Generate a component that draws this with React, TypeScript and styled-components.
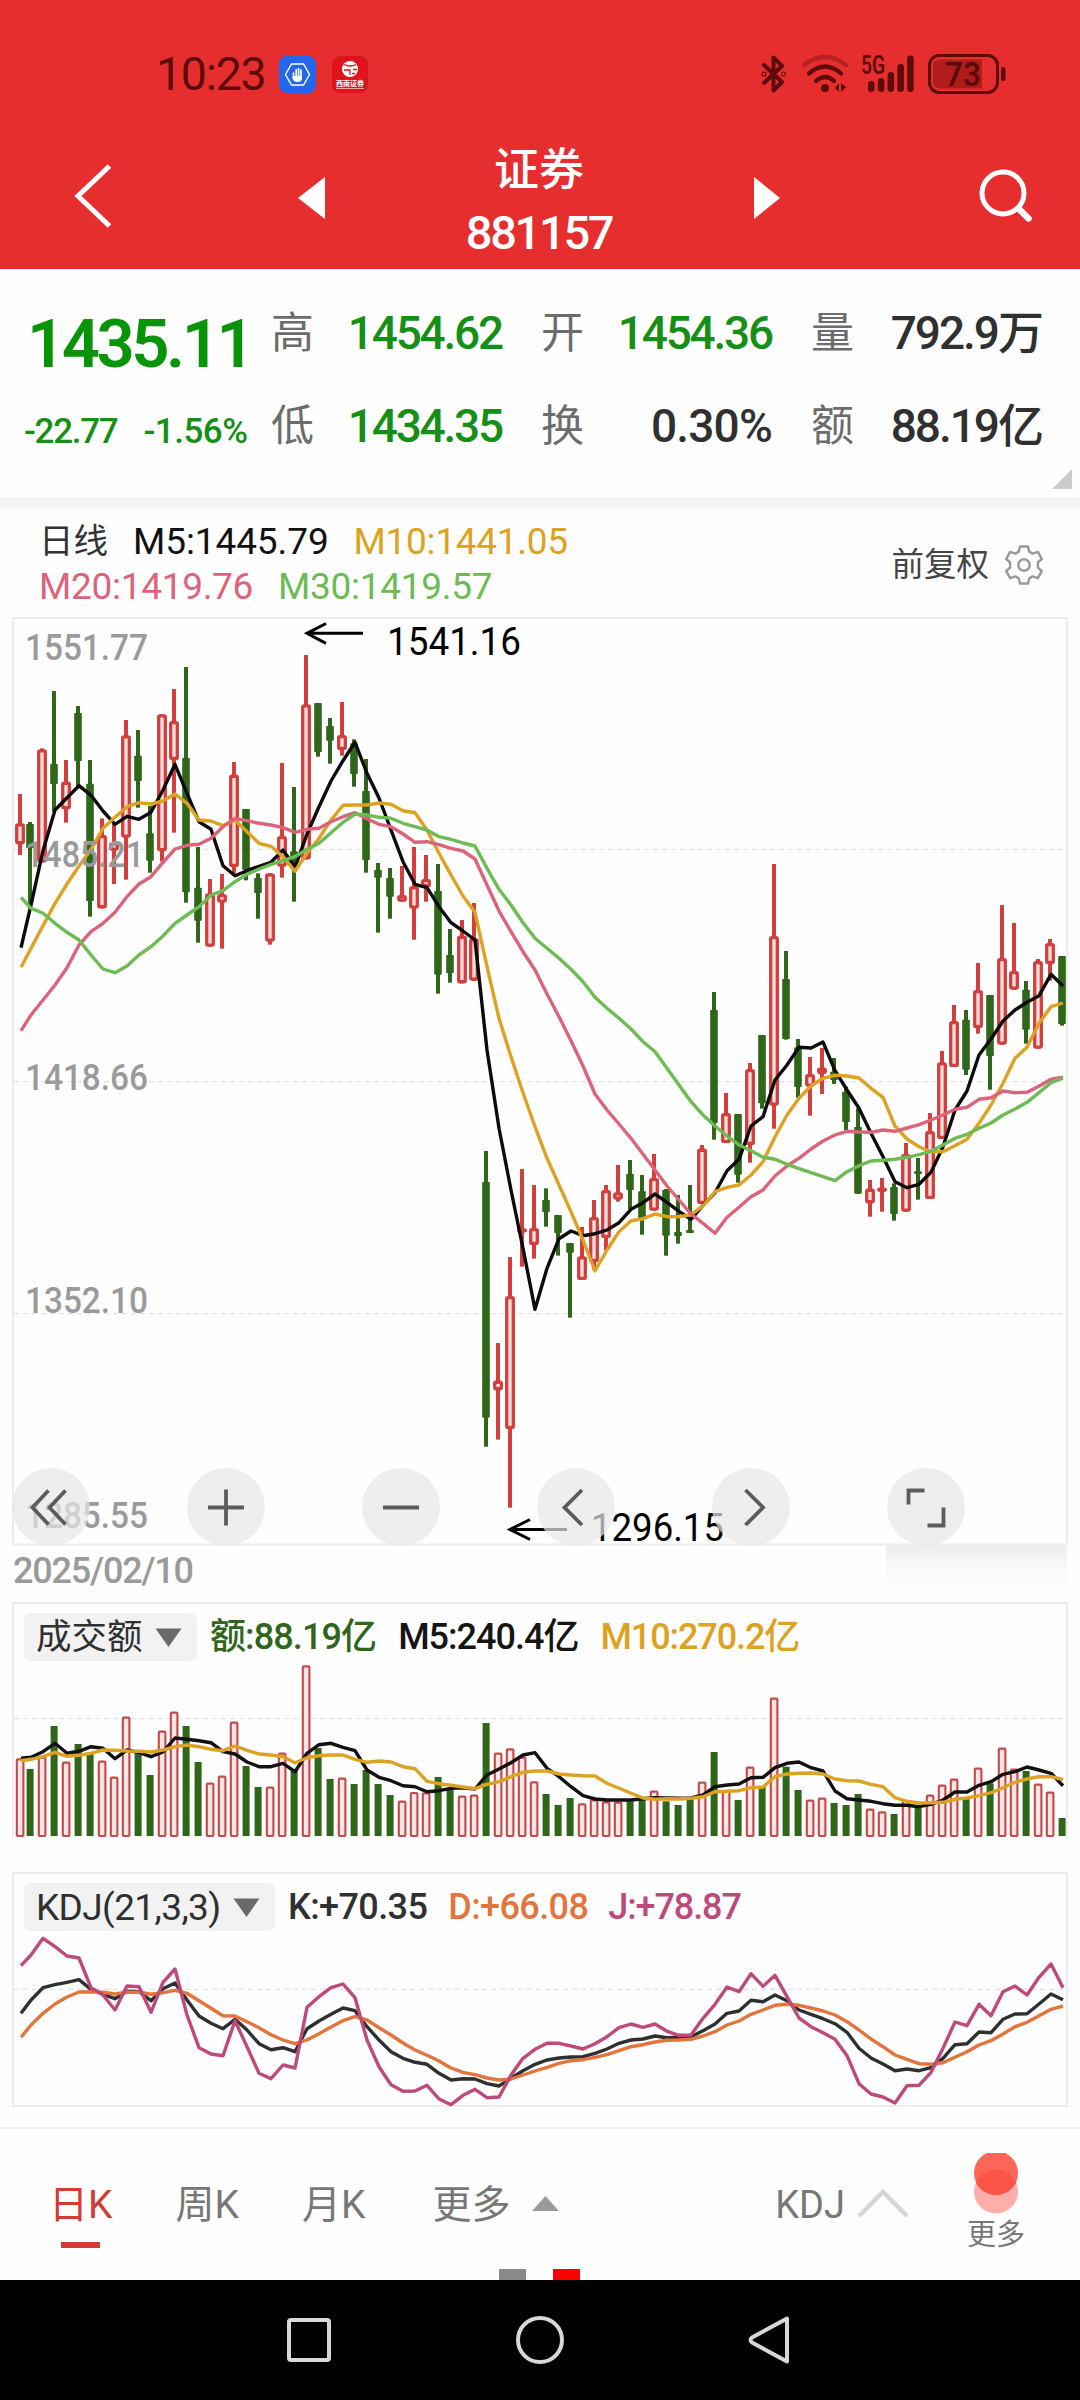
import React from "react";
import styled, { createGlobalStyle } from "styled-components";

const FONT = `Roboto, "Noto Sans CJK SC", sans-serif`;
const RED = "#d23f3d";
const GREEN = "#30661a";
const AMBER = "#dea222";

const Global = createGlobalStyle`
  html, body { margin: 0; padding: 0; background: #fefefe; }
  * { box-sizing: border-box; }
  svg { display: block; overflow: visible; }
`;

const Screen = styled.div`
  width: 1080px;
  height: 2400px;
  display: flex;
  flex-direction: column;
  background: #fefefe;
  font-family: ${FONT};
  white-space: nowrap;
  overflow: hidden;
`;

const Label = styled.span<{ $size: number; $color: string; $weight?: number; $track?: number }>`
  font-size: ${(p) => p.$size}px;
  color: ${(p) => p.$color};
  font-weight: ${(p) => p.$weight ?? 400};
  letter-spacing: ${(p) => p.$track ?? 0}px;
`;

/* ---------- header ---------- */

const Header = styled.header`
  height: 269px;
  background: #e62e2f;
  display: flex;
  flex-direction: column;
`;

const StatusBar = styled.div`
  height: 140px;
  padding: 8px 74px 0 156px;
  display: flex;
  align-items: center;
  justify-content: space-between;
`;

const StatusGroup = styled.div<{ $gap: number }>`
  display: flex;
  align-items: center;
  gap: ${(p) => p.$gap}px;
`;

const Clock = styled(Label)`
  line-height: 60px;
  width: 107px;
`;

const NavBar = styled.div`
  height: 129px;
  display: grid;
  grid-template-columns: 256px 110px 346px 110px 258px;
  grid-template-rows: 112px;
  align-items: center;
  justify-items: center;
`;

const NavEdge = styled.div<{ $end?: boolean }>`
  justify-self: ${(p) => (p.$end ? "end" : "start")};
  padding: ${(p) => (p.$end ? "0 46px 0 0" : "0 0 0 72px")};
`;

const Step = styled.svg`
  margin-top: 3px;
`;

const Title = styled.div`
  align-self: start;
  display: flex;
  flex-direction: column;
  align-items: center;
  line-height: 62px;
`;

/* ---------- quote ---------- */

const Quote = styled.section`
  position: relative;
  height: 228px;
  display: flex;
`;

const PriceBlock = styled.div`
  width: 271px;
  padding: 35px 0 0 24px;
`;

const Price = styled.div`
  padding-left: 3px;
  line-height: 80px;
  font-size: 67px;
  font-weight: 600;
  letter-spacing: -3.5px;
  color: #089408;
`;

const Change = styled.div`
  margin-top: 28px;
  display: flex;
  gap: 26px;
  line-height: 40px;
`;

const Stats = styled.div`
  padding-top: 17px;
  display: grid;
  grid-template-columns: repeat(3, 231px);
  grid-auto-rows: 93px;
  column-gap: 39px;
`;

const Stat = styled.div`
  display: flex;
  align-items: center;
  justify-content: space-between;
  line-height: 60px;
`;

const Corner = styled.i`
  position: absolute;
  right: 8px;
  bottom: 8px;
  border-left: 20px solid transparent;
  border-bottom: 20px solid #cbcbcb;
`;

const Divider = styled.div`
  height: 12px;
  background: #f4f4f4;
`;

/* ---------- charts ---------- */

const LegendBar = styled.section`
  height: 108px;
  padding: 10px 35px 0 39px;
  display: flex;
  justify-content: space-between;
`;

const LegendRow = styled.div`
  display: flex;
  gap: 25px;
  line-height: 45px;
`;

const Adjust = styled.div`
  height: 92px;
  display: flex;
  align-items: center;
  gap: 14px;
  line-height: 44px;
`;

const PriceChart = styled.section`
  position: relative;
  height: 929px;
`;

const Tools = styled.div`
  position: absolute;
  left: 12px;
  bottom: 0;
  display: flex;
  gap: 97px;
`;

const Tool = styled.button`
  width: 78px;
  height: 78px;
  padding: 0;
  border: 0;
  border-radius: 50%;
  background: rgba(231, 231, 231, 0.7);
`;

const DateRow = styled.div`
  position: relative;
  height: 56px;
  padding-left: 13px;
  line-height: 51px;
`;

const SoftShade = styled.div`
  position: absolute;
  left: 886px;
  top: 0;
  width: 181px;
  height: 44px;
  background: linear-gradient(#ededed, #f8f8f8 45%, #fefefe);
`;

const Panel = styled.section<{ $height: number; $open?: boolean; $gap?: number }>`
  width: 1056px;
  height: ${(p) => p.$height}px;
  margin: ${(p) => p.$gap ?? 0}px 0 0 12px;
  padding-top: 9px;
  border: 2px solid #ececec;
  ${(p) => p.$open && "border-bottom-color: transparent;"}
  display: flex;
  flex-direction: column;
`;

const PanelHead = styled.div`
  display: flex;
  align-items: center;
  height: 48px;
  padding-left: 10px;
  line-height: 51px;
`;

const Picker = styled.div<{ $width: number }>`
  width: ${(p) => p.$width}px;
  height: 48px;
  margin-right: 13px;
  padding: 0 15px 0 12px;
  border-radius: 7px;
  background: #f2f2f2;
  display: flex;
  align-items: center;
  justify-content: space-between;
`;

const Reading = styled(Label)<{ $after: number }>`
  margin-right: ${(p) => p.$after}px;
`;

const Plot = styled.svg`
  margin-left: -14px;
  flex: none;
`;

/* ---------- bottom ---------- */

const Tabs = styled.nav`
  position: relative;
  height: 153px;
  margin-top: 20px;
  border-top: 2px solid #f0f0f0;
  padding: 0 53px 0 49px;
  display: flex;
  justify-content: space-between;
`;

const TabGroup = styled.div<{ $gap: number }>`
  display: flex;
  gap: ${(p) => p.$gap}px;
`;

const Tab = styled.div<{ $active?: boolean }>`
  height: 122px;
  padding-top: 41px;
  display: flex;
  flex-direction: column;
  align-items: center;
  font-size: 39px;
  line-height: 70px;
  color: ${(p) => (p.$active ? "#d23a34" : "#777")};
  &::after {
    content: "";
    width: 39px;
    height: 6px;
    margin-top: 2px;
    background: ${(p) => (p.$active ? "#d23a34" : "transparent")};
  }
`;

const TabInline = styled.div<{ $gap: number; $before?: number; $size?: number }>`
  height: 111px;
  margin-left: ${(p) => p.$before ?? 0}px;
  padding-top: 41px;
  display: flex;
  align-items: center;
  gap: ${(p) => p.$gap}px;
  font-size: ${(p) => p.$size ?? 39}px;
  line-height: 70px;
  color: #777;
`;

const More = styled.div`
  width: 58px;
  margin: 24px 2px 0 0;
  display: flex;
  flex-direction: column;
  align-items: center;
  font-size: 29px;
  line-height: 42px;
  color: #777;
`;

const Pager = styled.div`
  position: absolute;
  left: 499px;
  bottom: 0;
  display: flex;
  gap: 27px;
`;

const PagerDot = styled.i<{ $on?: boolean }>`
  width: 27px;
  height: 11px;
  background: ${(p) => (p.$on ? "#fb0000" : "#8a8a8a")};
`;

const SystemNav = styled.footer`
  flex: 1;
  padding-right: 5px;
  background: #000;
  display: flex;
  justify-content: center;
  align-items: center;
  gap: 183px;
`;

/* ---------- data ---------- */

type Candle = [string, number, number, number, number];

/* Candles are [colour, high, body top, body bottom, low], three units to a pixel. */
const shift = (base: number, rows: Candle[]): Candle[] =>
  rows.map(([c, h, t, b, l]) => [c, h + base, t + base, b + base, l + base]);

const candles: Candle[] = [
  ...shift(0, [
    ["r", 552, 640, 703, 735], ["g", 636, 642, 714, 895], ["r", 415, 418, 757, 757], ["g", 243, 462, 522, 605],
    ["r", 450, 515, 598, 638], ["g", 288, 309, 453, 535], ["g", 450, 521, 873, 920], ["r", 625, 675, 895, 895],
    ["r", 640, 697, 722, 822], ["r", 330, 376, 683, 809], ["g", 360, 437, 513, 593], ["g", 588, 670, 752, 788],
    ["r", 313, 313, 724, 755], ["r", 237, 333, 450, 668], ["g", 171, 444, 847, 878], ["g", 711, 833, 932, 998],
    ["r", 807, 850, 1010, 1010], ["r", 792, 852, 878, 1016], ["r", 456, 494, 771, 790], ["g", 597, 597, 780, 811],
    ["g", 790, 804, 849, 926], ["r", 790, 790, 995, 1004], ["r", 459, 678, 770, 803], ["g", 531, 724, 745, 875],
    ["r", 135, 283, 748, 748], ["g", 279, 279, 426, 440], ["g", 324, 348, 392, 461], ["r", 276, 375, 420, 437],
    ["g", 388, 400, 492, 530], ["g", 447, 543, 750, 788], ["g", 759, 780, 803, 968], ["g", 774, 804, 860, 926],
    ["r", 768, 855, 875, 875], ["r", 711, 829, 896, 989], ["r", 735, 807, 832, 875], ["g", 762, 843, 1094, 1151],
    ["g", 957, 1035, 1089, 1118], ["r", 930, 977, 1120, 1120], ["r", 879, 985, 1112, 1112],
  ]),
  ...shift(1320, [
    ["g", 303, 396, 1103, 1190], ["r", 879, 992, 1021, 1169], ["r", 621, 738, 1137, 1373], ["r", 357, 535, 546, 650],
    ["r", 405, 534, 585, 626], ["g", 415, 450, 486, 530], ["g", 495, 495, 549, 617], ["g", 579, 579, 608, 803],
    ["r", 531, 619, 690, 690], ["r", 450, 501, 636, 660], ["r", 405, 420, 564, 602], ["r", 345, 427, 449, 455],
    ["g", 330, 372, 420, 478], ["g", 375, 424, 508, 554], ["r", 312, 384, 482, 482], ["g", 417, 420, 557, 617],
    ["g", 435, 546, 558, 581], ["g", 405, 540, 549, 549], ["r", 285, 296, 462, 462],
  ]),
  ...shift(630, [
    ["g", 516, 570, 909, 959], ["r", 819, 879, 969, 969], ["g", 882, 882, 1064, 1088], ["r", 729, 747, 975, 1028],
    ["g", 645, 645, 850, 866], ["r", 132, 348, 857, 926], ["g", 393, 477, 657, 659], ["g", 657, 682, 801, 833],
    ["r", 711, 762, 800, 887], ["r", 684, 743, 762, 822], ["g", 714, 755, 780, 792], ["g", 800, 815, 906, 930],
    ["g", 865, 921, 1121, 1121], ["r", 1080, 1106, 1150, 1190], ["r", 1074, 1103, 1115, 1175], ["g", 1090, 1101, 1182, 1202],
    ["r", 969, 1002, 1175, 1175], ["g", 1014, 1054, 1062, 1139], ["r", 879, 933, 1137, 1137], ["r", 693, 727, 957, 957],
    ["r", 555, 603, 741, 741], ["g", 570, 599, 749, 765], ["r", 429, 510, 624, 641], ["g", 525, 525, 708, 809],
    ["r", 255, 414, 674, 674], ["r", 309, 453, 509, 509], ["g", 483, 509, 629, 671], ["r", 417, 423, 686, 686],
    ["r", 357, 369, 432, 482], ["g", 408, 408, 612, 617],
  ]),
];

const up = (base: number, ys: number[]) => ys.map((y) => y + base);

const m5 = [
  ...up(0, [1013, 885, 722, 600, 563, 527, 556, 603, 643, 619, 628, 607, 540, 463, 550, 635, 658, 767, 797, 782, 769, 757, 720, 772, 672, 590, 513, 452, 397, 490, 564, 660, 755, 823, 833, 890, 938, 963, 990]),
  ...up(1320, [0, 235, 420, 595, 778, 655, 566, 543, 557, 551, 540, 518, 478, 458, 432, 457, 484, 508, 466]),
  ...up(630, [1118, 1052, 1018, 918, 890, 780, 735, 682, 684, 666, 752, 810, 865, 940, 1010, 1085, 1103, 1093, 1057, 980, 870, 813, 705, 657, 603, 570, 547, 527, 463, 498]),
];
const m10 = [
  ...up(0, [1072, 1015, 947, 880, 822, 768, 718, 655, 622, 590, 578, 582, 573, 552, 580, 630, 633, 647, 630, 665, 700, 709, 740, 784, 730, 685, 630, 586, 585, 585, 579, 583, 602, 608, 660, 730, 795, 858, 907, 1070, 1225]),
  ...up(1320, [20, 128, 230, 325, 405, 485, 570, 663, 600, 545, 512, 506, 492, 500, 500, 494, 468]),
  ...up(630, [1115, 1102, 1095, 1065, 1025, 950, 885, 835, 798, 775, 766, 768, 774, 805, 832, 918, 957, 980, 995, 995, 977, 958, 910, 855, 790, 715, 682, 610, 560, 549]),
];
const m20 = [
  ...up(0, [1262, 1215, 1170, 1125, 1073, 1005, 965, 940, 907, 860, 822, 800, 757, 717, 706, 703, 685, 650, 625, 632, 640, 645, 653, 667, 658, 655, 635, 620, 608, 626, 643, 650, 672, 697, 695, 704, 715, 723, 747, 825, 903, 965, 1025, 1080, 1152, 1220, 1292, 1368]),
  ...up(1320, [132, 180, 222, 265, 313, 360, 408, 450, 492, 520, 550]),
  ...up(630, [1192, 1162, 1130, 1110, 1068, 1038, 1015, 987, 963, 945, 934, 936, 937, 930, 934, 924, 914, 900, 885, 868, 862, 838, 833, 813, 818, 817, 799, 778, 772]),
];
const m30 = [
  ...up(0, [862, 895, 910, 940, 967, 990, 1035, 1077, 1088, 1068, 1035, 1010, 978, 940, 915, 890, 855, 842, 815, 793, 777, 763, 752, 740, 718, 700, 668, 637, 612, 615, 622, 625, 640, 650, 660, 680, 688, 699, 708, 775, 838, 885, 938, 985, 1015, 1045, 1078, 1115, 1162, 1195, 1225, 1257, 1295, 1325, 1375, 1425]),
  ...up(1320, [155, 195]),
  ...up(630, [918, 948, 975, 992, 1012, 1018, 1033, 1046, 1058, 1070, 1082, 1055, 1037, 1023, 1021, 1018, 1012, 1004, 994, 975, 955, 943, 925, 909, 885, 867, 847, 818, 788, 774]),
];

const volume = [
  355, 387, 350, 258, 365, 312, 340, 362, 410, 230, 340, 405, 272, 215, 258, 366, 428, 407, 245, 378, 441, 440, 338, 390, 76, 324, 417, 413, 432, 390, 432, 465, 482, 456, 457, 411, 450, 467, 464, 249, 338, 325, 350, 424,
  462, 495, 474, 490, 478, 484, 485, 484, 480, 452, 484, 495, 478, 425, 336, 452, 480, 380, 440, 173, 380, 450, 479, 473, 489, 495, 462, 506, 514, 522, 480, 495, 464, 434, 416, 475, 383, 430, 323, 386, 393, 431, 455, 534,
];
const vol5 = [
  355, 352, 335, 310, 340, 334, 320, 325, 356, 330, 338, 350, 336, 294, 298, 302, 308, 335, 342, 366, 380, 380, 370, 395, 340, 314, 310, 322, 332, 390, 412, 422, 437, 440, 455, 452, 445, 443, 447, 405, 387, 368, 345, 338,
  385, 410, 440, 467, 477, 480, 480, 480, 476, 473, 474, 475, 474, 465, 440, 435, 432, 413, 412, 383, 370, 366, 383, 393, 453, 476, 480, 484, 491, 496, 496, 500, 493, 480, 456, 456, 436, 425, 403, 395, 381, 390, 400, 437,
];
const vol10 = [
  362, 358, 350, 337, 349, 346, 340, 330, 331, 333, 334, 336, 330, 320, 315, 320, 328, 332, 318, 331, 342, 345, 350, 368, 353, 347, 345, 345, 358, 367, 363, 366, 380, 386, 424, 431, 436, 441, 446, 433, 425, 410, 397, 393,
  393, 402, 405, 407, 408, 430, 445, 460, 474, 478, 476, 477, 475, 470, 455, 454, 452, 443, 441, 410, 402, 400, 399, 402, 417, 422, 423, 433, 440, 473, 484, 489, 488, 487, 478, 474, 467, 458, 443, 427, 417, 410, 410, 419,
];

const kdjJ = [
  317, 285, 235, 260, 288, 294, 383, 405, 450, 378, 380, 457, 367, 327, 465, 563, 582, 587, 482, 560, 640, 656, 615, 624, 442, 410, 383, 372, 413, 540, 620, 674, 694, 693, 676, 717, 734, 706, 688, 713, 711, 645, 595, 568,
  550, 550, 558, 567, 551, 530, 503, 492, 502, 492, 514, 526, 525, 475, 433, 381, 395, 341, 379, 346, 410, 474, 500, 518, 538, 587, 671, 702, 711, 729, 677, 676, 637, 565, 486, 497, 433, 467, 395, 378, 405, 352, 312, 383,
];
const kdjK = [
  460, 420, 383, 374, 367, 359, 388, 403, 416, 394, 395, 422, 386, 369, 420, 468, 490, 506, 478, 510, 551, 569, 563, 575, 506, 483, 463, 444, 452, 500, 540, 575, 595, 607, 613, 640, 660, 656, 657, 671, 678, 655, 632, 613,
  600, 594, 591, 590, 580, 567, 550, 540, 537, 528, 533, 532, 530, 512, 492, 460, 453, 421, 425, 405, 422, 450, 463, 476, 491, 517, 565, 594, 612, 632, 627, 632, 623, 595, 554, 551, 516, 518, 478, 462, 461, 432, 402, 419,
];
const kdjD = [
  532, 495, 460, 432, 411, 396, 395, 397, 402, 397, 397, 403, 398, 391, 400, 422, 445, 467, 468, 485, 503, 524, 540, 551, 540, 521, 501, 482, 470, 480, 503, 525, 549, 570, 586, 603, 624, 637, 644, 654, 660, 657, 645, 633,
  622, 610, 602, 599, 592, 584, 572, 560, 554, 546, 541, 540, 538, 528, 515, 495, 483, 463, 450, 436, 433, 436, 444, 453, 465, 485, 510, 537, 560, 585, 598, 611, 613, 608, 592, 575, 555, 542, 522, 500, 487, 467, 448, 438,
];

const xAt = (i: number) => (i === 0 ? 20 : 18 + 12 * i);

const Curve = ({ ys, color, origin }: { ys: number[]; color: string; origin: number }) => (
  <polyline
    points={ys.map((y, i) => `${xAt(i) + 1},${(origin + y / 3).toFixed(1)}`).join(" ")}
    fill="none"
    stroke={color}
    strokeWidth={3.4}
    strokeLinejoin="round"
  />
);

const Grid = ({ y }: { y: number }) => (
  <line x1={14} x2={1066} y1={y} y2={y} stroke="#e2e2e2" strokeWidth={1.3} strokeDasharray="5 4" />
);

const CandleMark = ({ i, row }: { i: number; row: Candle }) => {
  const [c, h, t, b, l] = row;
  const x = xAt(i);
  const y = (v: number) => 610 + v / 3;
  const hollow = c === "r";
  const height = (b - t) / 3;
  return (
    <g>
      <line x1={x} x2={x} y1={y(h)} y2={y(l)} stroke={hollow ? RED : GREEN} strokeWidth={4} />
      {hollow ? (
        <rect
          x={x - 3.3}
          y={y(t) + 1.6}
          width={6.6}
          height={Math.max(height - 3.2, 1)}
          rx={1.2}
          fill="#fbe2e0"
          stroke={RED}
          strokeWidth={3.3}
        />
      ) : (
        <rect x={x - 3.8} y={y(t)} width={7.6} height={height} rx={0.8} fill={GREEN} />
      )}
    </g>
  );
};

const VolumeBar = ({ i, top }: { i: number; top: number }) => {
  const x = xAt(i);
  const y = 1640 + top / 3;
  return candles[i][0] === "r" ? (
    <rect x={x - 3.2} y={y + 1} width={6.6} height={1835 - y} rx={1} fill="#ffe6e5" stroke="#c4484a" strokeWidth={2.1} />
  ) : (
    <rect x={x - 3.4} y={y} width={7} height={1836 - y} fill={GREEN} />
  );
};

const AxisText = ({ y, width, children }: { y: number; width: number; children: string }) => (
  <text x={25} y={y} fontSize={36.5} fontWeight={500} fill="#9a9a9a" textLength={width} lengthAdjust="spacingAndGlyphs">
    {children}
  </text>
);

/* ---------- icons ---------- */

const INK = "#5e0a09";

const HandApp = () => (
  <svg width="37" height="37" viewBox="0 0 37 37">
    <rect width="37" height="37" rx="8" fill="#2467ec" />
    <path d="M12.5 8h12l6 10.500-6 10.500h-12l-6-10.500z" fill="none" stroke="#fff" strokeWidth="1.4" />
    <path d="M14.500 17v5M17.200 13.500v8M19.600 12.500v9M22 14v8" stroke="#fff" strokeWidth="1.700" strokeLinecap="round" />
    <path d="M13.600 20h9.300v2.500q0 3.500-4.500 3.500-3.500 0-4.800-3z" fill="#fff" />
  </svg>
);

const BrokerApp = () => (
  <svg width="36" height="37" viewBox="0 0 36 37">
    <rect width="36" height="37" rx="8" fill="#e0131d" />
    <circle cx="18" cy="13" r="8" fill="#fff" />
    <path d="M12 8.500q6 3 12 0M12 14h6v5M21 13.500h4M20 17.500h3" fill="none" stroke="#e0131d" strokeWidth="1.300" />
    <text x="4" y="30" fontSize="7" fontWeight="700" fill="#fff" textLength="28">西南证券</text>
    <path d="M4 32.500h28" stroke="#f2a0a0" strokeWidth="1" />
  </svg>
);

const Bluetooth = () => (
  <svg width="28" height="38" viewBox="0 0 28 38" fill="none" stroke={INK} strokeWidth="4" strokeLinejoin="round" strokeLinecap="round">
    <path d="M3 10l18 17-8.500 8.500V2.500L21 11 3 28" />
    <circle cx="3" cy="19" r=".5" />
    <circle cx="22.500" cy="19" r=".5" />
  </svg>
);

const Wifi = () => (
  <svg width="46" height="38" viewBox="0 0 46 38" fill="none" strokeWidth="4.200" strokeLinecap="round">
    <path d="M2 10q21-16 42 0" stroke={INK} strokeOpacity=".35" />
    <path d="M7 18.500q16-14 32 0" stroke={INK} />
    <path d="M14 26q9-8 18 0" stroke={INK} />
    <circle cx="23" cy="33" r="4" fill={INK} />
    <path d="M33 33l4-5v9zM39 28v9l5-5z" fill={INK} />
  </svg>
);

const Signal = () => (
  <svg width="54" height="38" viewBox="0 0 54 38">
    <text x="0" y="19" fontSize="25" fontWeight="600" fill={INK} textLength="24" lengthAdjust="spacingAndGlyphs">5G</text>
    {[26, 23, 17, 9, 0.5].map((top, i) => (
      <rect key={top} x={7 + i * 9.8} y={top} width="6.500" height={37 - top} rx="3.200" fill={INK} />
    ))}
  </svg>
);

const Battery = () => (
  <svg width="78" height="40" viewBox="0 0 78 40">
    <rect x="1.500" y="1.500" width="68" height="37" rx="10" fill="none" stroke={INK} strokeWidth="3" />
    <path d="M12 5.500h42v29H12q-7 0-7-7v-15q0-7 7-7z" fill="#b01c1c" />
    <rect x="73" y="13" width="4.500" height="14" rx="2.200" fill={INK} />
    <text x="17" y="32" fontSize="33" fontWeight="600" fill={INK} textLength="36" lengthAdjust="spacingAndGlyphs">73</text>
  </svg>
);

const Gear = () => (
  <svg width="42" height="42" viewBox="0 0 42 42" fill="none" stroke="#999" strokeWidth="2.500" strokeLinejoin="round">
    <path d="M17 2.500h8l1.300 5.200 3.300 1.900 5.200-1.700 4 6.900-3.900 3.700v5l3.900 3.700-4 6.900-5.200-1.700-3.300 1.900-1.300 5.200h-8l-1.300-5.200-3.300-1.900-5.200 1.700-4-6.900 3.900-3.700v-5l-3.900-3.700 4-6.900 5.200 1.700 3.300-1.900z" />
    <circle cx="21" cy="21" r="5.700" />
  </svg>
);

const toolPaths = [
  "M36.500 22.500L20.500 39.500l16 17M53.500 22.500L37.500 39.500l16 17",
  "M21 39.500h36M39 21.500v36",
  "M21 39.500h36",
  "M45 22L27.500 39.500 45 57",
  "M33.500 22L51 39.500 33.500 57",
  "M21.500 36.500V22.500h16M40.500 57.500h16v-18",
];

const Down = () => (
  <svg width="27" height="19" viewBox="0 0 27 19">
    <path d="M.5.500h26L13.500 19z" fill="#6a6a6a" />
  </svg>
);

/* Two overlapping discs; the upper one is cut flat along its top edge. */
const MoreDots = () => (
  <svg width="44" height="61" viewBox="0 0 44 61">
    <defs>
      <clipPath id="flatTop"><rect x="0" y="0" width="44" height="61" /></clipPath>
      <clipPath id="upperDisc"><circle cx="22" cy="20" r="22" /></clipPath>
    </defs>
    <g clipPath="url(#flatTop)">
      <circle cx="22" cy="38.500" r="22" fill="#ffaeaa" />
      <circle cx="22" cy="20" r="22" fill="#fc6659" />
      <circle cx="22" cy="38.500" r="22" fill="#fb5548" clipPath="url(#upperDisc)" />
    </g>
  </svg>
);

const stats: [string, string, string, number][] = [
  ["高", "1454.62", "#158f15", -2.2],
  ["开", "1454.36", "#158f15", -2.2],
  ["量", "792.9万", "#303030", -2],
  ["低", "1434.35", "#158f15", -2.2],
  ["换", "0.30%", "#303030", -0.8],
  ["额", "88.19亿", "#303030", -2],
];

export default function App() {
  return (
    <Screen>
      <Global />
      <Header>
        <StatusBar>
          <StatusGroup $gap={16}>
            <Clock $size={46.5} $color={INK} $weight={450} $track={-1.3}>10:23</Clock>
            <HandApp />
            <BrokerApp />
          </StatusGroup>
          <StatusGroup $gap={13}>
            <Bluetooth />
            <Wifi />
            <Signal />
            <Battery />
          </StatusGroup>
        </StatusBar>
        <NavBar>
          <NavEdge>
            <svg width="40" height="66" viewBox="0 0 40 66" fill="none" stroke="#fff" strokeWidth="5">
              <path d="M37.500 3L6 33l31.500 30" />
            </svg>
          </NavEdge>
          <Step width="27" height="42" viewBox="0 0 27 42"><path d="M27 0v42L0 21z" fill="#fff" /></Step>
          <Title>
            <Label $size={45} $color="#fff" $weight={500}>证券</Label>
            <Label $size={47} $color="#fff" $weight={500} $track={-2.3}>881157</Label>
          </Title>
          <Step width="27" height="42" viewBox="0 0 27 42"><path d="M0 0v42L26 21z" fill="#fff" /></Step>
          <NavEdge $end>
            <svg width="56" height="56" viewBox="0 0 56 56" fill="none" stroke="#fff" strokeWidth="5" strokeLinecap="round">
              <circle cx="25" cy="25" r="21" />
              <path d="M42 42l8.500 8.500" strokeWidth="6.500" />
            </svg>
          </NavEdge>
        </NavBar>
      </Header>

      <Quote>
        <PriceBlock>
          <Price>1435.11</Price>
          <Change>
            <Label $size={35} $color="#158f15" $weight={500} $track={-1.3}>-22.77</Label>
            <Label $size={35} $color="#158f15" $weight={500} $track={-0.5}>-1.56%</Label>
          </Change>
        </PriceBlock>
        <Stats>
          {stats.map(([name, value, color, track]) => (
            <Stat key={name}>
              <Label $size={43} $color="#6c6c6c">{name}</Label>
              <Label $size={46} $color={color} $weight={500} $track={track}>{value}</Label>
            </Stat>
          ))}
        </Stats>
        <Corner />
      </Quote>
      <Divider />

      <LegendBar>
        <div>
          <LegendRow>
            <Label $size={34.5} $color="#333">日线</Label>
            <Label $size={37} $color="#111" $track={-0.1}>M5:1445.79</Label>
            <Label $size={37} $color={AMBER} $track={-0.3}>M10:1441.05</Label>
          </LegendRow>
          <LegendRow>
            <Label $size={37} $color="#dd637b" $track={-0.3}>M20:1419.76</Label>
            <Label $size={37} $color="#6dbb53" $track={-0.3}>M30:1419.57</Label>
          </LegendRow>
        </div>
        <Adjust>
          <Label $size={32.5} $color="#444">前复权</Label>
          <Gear />
        </Adjust>
      </LegendBar>

      <PriceChart>
        <svg width="1080" height="929" viewBox="0 617 1080 929" fontFamily={FONT}>
          <rect x="13" y="618" width="1054" height="926.500" fill="none" stroke="#ececec" strokeWidth="2" />
          <Grid y={849.3} />
          <Grid y={1081.7} />
          <Grid y={1313.7} />
          {candles.map((row, i) => <CandleMark key={i} i={i} row={row} />)}
          <Curve ys={m5} color="#0c0c0c" origin={610} />
          <Curve ys={m10} color={AMBER} origin={610} />
          <Curve ys={m20} color="#dd637b" origin={610} />
          <Curve ys={m30} color="#6dbb53" origin={610} />
          <AxisText y={660} width={123}>1551.77</AxisText>
          <AxisText y={867} width={119}>1485.21</AxisText>
          <AxisText y={1090} width={123}>1418.66</AxisText>
          <AxisText y={1313} width={123}>1352.10</AxisText>
          <AxisText y={1528} width={123}>1285.55</AxisText>
          <g fill="none" stroke="#000" strokeWidth="3">
            <path d="M363 633.300H307M326 623.500L307 633.300l19 10" />
            <path d="M567 1529.500H510M530 1519.500L510 1529.500l20 10" />
          </g>
          <g fontSize="38" fill="#000">
            <text x="387" y="655" textLength="134" lengthAdjust="spacingAndGlyphs">1541.16</text>
            <text x="591" y="1540.500" textLength="133" lengthAdjust="spacingAndGlyphs">1296.15</text>
          </g>
        </svg>
        <Tools>
          {toolPaths.map((d) => (
            <Tool key={d}>
              <svg width="78" height="78" viewBox="0 0 78 78" fill="none" stroke="#5c5c5c" strokeWidth="3.800">
                <path d={d} />
              </svg>
            </Tool>
          ))}
        </Tools>
      </PriceChart>

      <DateRow>
        <Label $size={36} $color="#9a9a9a" $weight={500} $track={-1.2}>2025/02/10</Label>
        <SoftShade />
      </DateRow>

      <Panel $height={237} $open>
        <PanelHead>
          <Picker $width={173}>
            <Label $size={35.5} $color="#303030">成交额</Label>
            <Down />
          </Picker>
          <Reading $size={36} $color={GREEN} $weight={500} $track={-0.9} $after={22}>额:88.19亿</Reading>
          <Reading $size={36} $color="#151515" $weight={500} $track={-1} $after={22}>M5:240.4亿</Reading>
          <Reading $size={36} $color={AMBER} $weight={500} $track={-1.1} $after={0}>M10:270.2亿</Reading>
        </PanelHead>
        <Plot width="1080" height="176" viewBox="0 1661 1080 176">
          <Grid y={1718.7} />
          {volume.map((top, i) => <VolumeBar key={i} i={i} top={top} />)}
          <Curve ys={vol5} color="#111" origin={1640} />
          <Curve ys={vol10} color={AMBER} origin={1640} />
        </Plot>
      </Panel>

      <Panel $height={235} $gap={33}>
        <PanelHead>
          <Picker $width={251}>
            <Label $size={37} $color="#303030" $track={-0.6}>KDJ(21,3,3)</Label>
            <Down />
          </Picker>
          <Reading $size={36} $color="#303030" $weight={500} $track={-0.6} $after={21}>K:+70.35</Reading>
          <Reading $size={36} $color="#e2743c" $weight={500} $track={-0.6} $after={20}>D:+66.08</Reading>
          <Reading $size={36} $color="#bd4a7b" $weight={500} $track={-1.1} $after={0}>J:+78.87</Reading>
        </PanelHead>
        <Plot width="1080" height="174" viewBox="0 1931 1080 174">
          <Grid y={1989.3} />
          <Curve ys={kdjK} color="#2d3030" origin={1860} />
          <Curve ys={kdjD} color="#e2743c" origin={1860} />
          <Curve ys={kdjJ} color="#bd4a7b" origin={1860} />
        </Plot>
      </Panel>

      <Tabs>
        <TabGroup $gap={63}>
          <Tab $active>日K</Tab>
          <Tab>周K</Tab>
          <Tab>月K</Tab>
          <TabInline $gap={22} $before={4}>
            更多
            <svg width="27" height="15" viewBox="0 0 27 15"><path d="M0 13L13.500-2 27 13z" fill="#9a9a9a" /></svg>
          </TabInline>
        </TabGroup>
        <TabGroup $gap={58}>
          <TabInline $gap={12} $size={38}>
            KDJ
            <svg width="52" height="30" viewBox="0 0 52 30" fill="none" stroke="#d6d6d6" strokeWidth="4.500">
              <path d="M2 26L26 2l24 24" />
            </svg>
          </TabInline>
          <More>
            <MoreDots />
            更多
          </More>
        </TabGroup>
        <Pager>
          <PagerDot />
          <PagerDot $on />
        </Pager>
      </Tabs>

      <SystemNav>
        <svg width="46" height="46" viewBox="0 0 46 46" fill="none" stroke="#d8d8d8" strokeWidth="4">
          <rect x="3" y="3" width="40" height="40" rx="2" />
        </svg>
        <svg width="50" height="50" viewBox="0 0 50 50" fill="none" stroke="#d8d8d8" strokeWidth="4">
          <circle cx="25" cy="25" r="22" />
        </svg>
        <svg width="42" height="50" viewBox="0 0 42 50" fill="none" stroke="#d8d8d8" strokeWidth="4" strokeLinejoin="round">
          <path d="M39 3.500v43L4 27.500q-3-2.500 0-5z" />
        </svg>
      </SystemNav>
    </Screen>
  );
}
